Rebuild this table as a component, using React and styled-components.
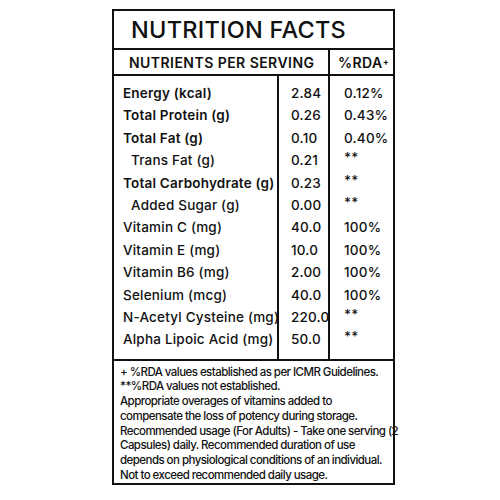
import React from "react";
import styled, { createGlobalStyle } from "styled-components";

const Global = createGlobalStyle`
  html, body { margin: 0; padding: 0; background: #fff; }
  body { font-family: Inter, "Noto Sans", sans-serif; color: #111; }
`;

const Page = styled.div`
  padding: 9px 0 0 112px;
`;

const Card = styled.div`
  width: 279px;
  border: 2px solid #111;
  display: flex;
  flex-direction: column;
`;

const Title = styled.div`
  height: 37px;
  border-bottom: 2px solid #111;
  padding-left: 17px;
  font-size: 23.5px;
  font-weight: 500;
  letter-spacing: 0.25px;
  line-height: 40px;
  display: flex;
  align-items: center;
`;

const HeaderRow = styled.div`
  display: grid;
  grid-template-columns: 214px 1fr;
  height: 24px;
  border-bottom: 2px solid #111;
`;

const HeaderCell = styled.div`
  font-size: 14px;
  font-weight: 600;
  letter-spacing: 0.45px;
  display: flex;
  align-items: center;
  padding-left: ${(p) => p.$pad}px;
  border-left: ${(p) => (p.$divider ? "2px solid #111" : "none")};
`;

const Sup = styled.sup`
  font-size: 9px;
  font-weight: 700;
  vertical-align: 7px;
  line-height: 0;
`;

const Body = styled.div`
  display: grid;
  grid-template-columns: 163px 51px 1fr;
  border-bottom: 2px solid #111;
`;

const Column = styled.div`
  padding: 6px 0 8px ${(p) => p.$pad}px;
  border-left: ${(p) => (p.$divider ? "2px solid #111" : "none")};
  display: flex;
  flex-direction: column;
`;

const Cell = styled.div`
  height: 22.4px;
  line-height: 22.4px;
  font-size: 13.5px;
  font-weight: ${(p) => (p.$bold ? 600 : 500)};
  letter-spacing: 0.2px;
  padding-left: ${(p) => (p.$indent ? 8 : 0)}px;
  white-space: nowrap;
  position: relative;
  top: ${(p) => (p.$raise ? -3 : 0)}px;
`;

const Notes = styled.div`
  padding: 4px 0 0 6px;
  height: 118px;
  font-size: 11.5px;
  font-weight: 500;
  line-height: 14.7px;
  letter-spacing: -0.55px;
  white-space: nowrap;
`;

const rows = [
  { name: "Energy (kcal)", bold: true, v: "2.84", r: "0.12%" },
  { name: "Total Protein (g)", bold: true, v: "0.26", r: "0.43%" },
  { name: "Total Fat (g)", bold: true, v: "0.10", r: "0.40%" },
  { name: "Trans Fat (g)", indent: true, v: "0.21", r: "**" },
  { name: "Total Carbohydrate (g)", bold: true, v: "0.23", r: "**" },
  { name: "Added Sugar (g)", indent: true, v: "0.00", r: "**" },
  { name: "Vitamin C (mg)", v: "40.0", r: "100%" },
  { name: "Vitamin E (mg)", v: "10.0", r: "100%" },
  { name: "Vitamin B6 (mg)", v: "2.00", r: "100%" },
  { name: "Selenium (mcg)", v: "40.0", r: "100%" },
  { name: "N-Acetyl Cysteine (mg)", v: "220.0", r: "**" },
  { name: "Alpha Lipoic Acid (mg)", v: "50.0", r: "**" },
];

export default function App() {
  return (
    <>
      <Global />
      <Page>
        <Card>
          <Title>NUTRITION FACTS</Title>
          <HeaderRow>
            <HeaderCell $pad={15}>NUTRIENTS PER SERVING</HeaderCell>
            <HeaderCell $pad={8} $divider>
              %RDA<Sup>+</Sup>
            </HeaderCell>
          </HeaderRow>
          <Body>
            <Column $pad={9}>
              {rows.map((r) => (
                <Cell key={r.name} $bold={r.bold} $indent={r.indent}>
                  {r.name}
                </Cell>
              ))}
            </Column>
            <Column $pad={12} $divider>
              {rows.map((r) => (
                <Cell key={r.name}>{r.v}</Cell>
              ))}
            </Column>
            <Column $pad={14} $divider>
              {rows.map((r) => (
                <Cell key={r.name} $raise={r.r === "**"}>
                  {r.r}
                </Cell>
              ))}
            </Column>
          </Body>
          <Notes>
            + %RDA values established as per ICMR Guidelines.
            <br />
            **%RDA values not established.
            <br />
            Appropriate overages of vitamins added to
            <br />
            compensate the loss of potency during storage.
            <br />
            Recommended usage (For Adults) - Take one serving (2
            <br />
            Capsules) daily. Recommended duration of use
            <br />
            depends on physiological conditions of an individual.
            <br />
            Not to exceed recommended daily usage.
          </Notes>
        </Card>
      </Page>
    </>
  );
}
